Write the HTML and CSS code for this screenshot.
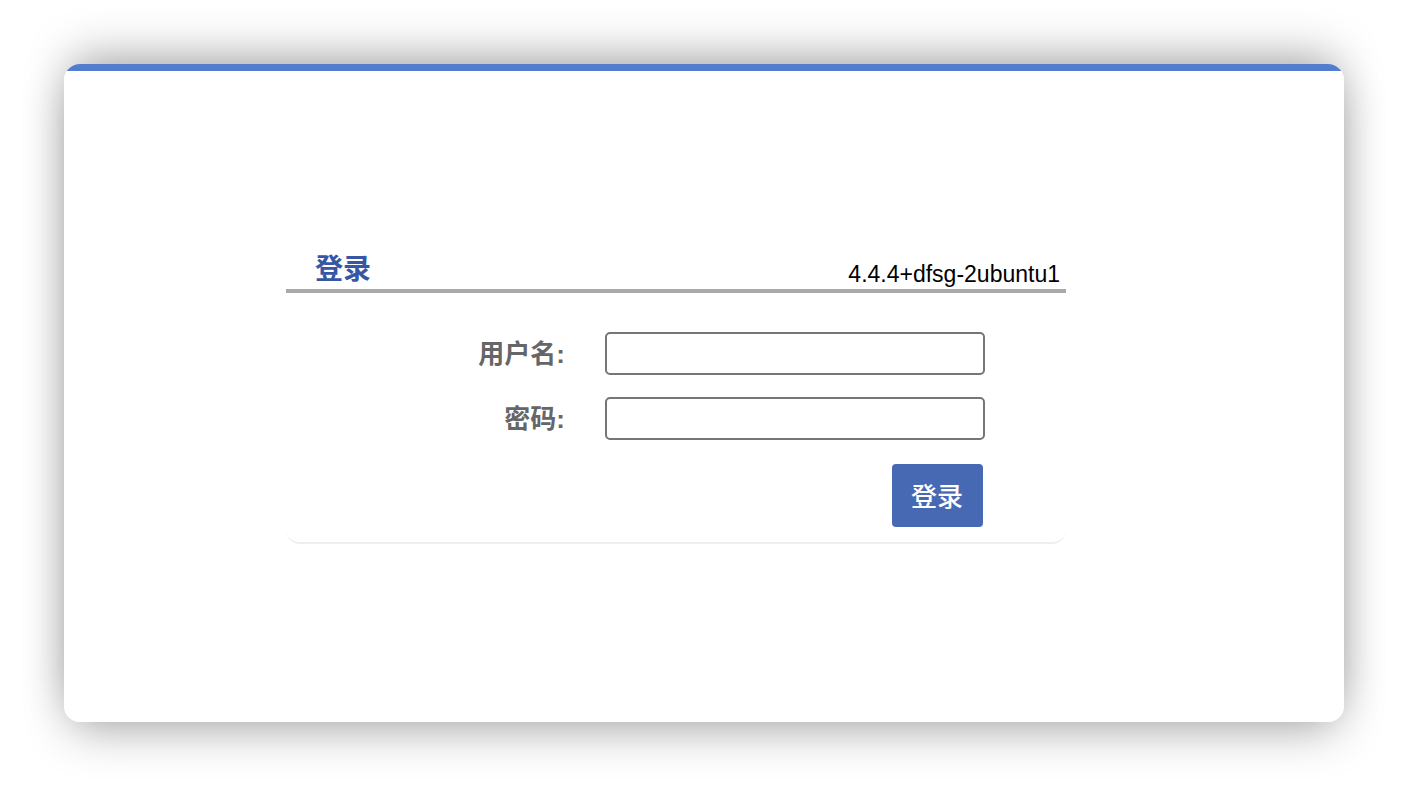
FILE: index.html
```
<!DOCTYPE html>
<html lang="zh-CN">
<head>
<meta charset="utf-8">
<title>登录</title>
<link rel="stylesheet" href="styles.css">
</head>
<body>
<main class="window">
  <form class="login">
    <header class="login-header">
      <h1 class="title">登录</h1>
      <span class="version">4.4.4+dfsg-2ubuntu1</span>
    </header>
    <div class="fields">
      <label class="label" for="user">用户名:</label>
      <input class="input" id="user" type="text">
      <label class="label" for="pass">密码:</label>
      <input class="input" id="pass" type="password">
    </div>
    <div class="actions">
      <button class="submit" type="submit">登录</button>
    </div>
  </form>
</main>
</body>
</html>
```
FILE: styles.css
```
* {
  box-sizing: border-box;
}

body {
  margin: 0;
  min-height: 100vh;
  padding: 64px;
  display: flex;
  background: #fff;
  font-family: "Liberation Sans", "Noto Sans CJK SC", sans-serif;
}

.window {
  flex: 1;
  display: flex;
  justify-content: center;
  align-items: flex-start;
  padding: 176px 56px 0 0;
  border-radius: 16px;
  background: linear-gradient(#527dcf 7px, #fff 7px);
  box-shadow: 0 16px 48px -8px rgba(0, 0, 0, 0.3), 0 -16px 48px -8px rgba(0, 0, 0, 0.3);
}

.login {
  flex: 0 1 780px;
  border-bottom: 2px solid #eee;
  border-radius: 0 0 14px 14px;
}

.login-header {
  display: flex;
  justify-content: space-between;
  align-items: flex-end;
  padding: 11px 6px 0 29px;
  border-bottom: 4px solid #a9a9a9;
}

.title {
  margin: 0;
  font-size: 28px;
  line-height: 38px;
  color: #3557a5;
}

.version {
  font-size: 23px;
  line-height: 30px;
}

.fields {
  display: grid;
  grid-template-columns: 279px 380px;
  column-gap: 40px;
  row-gap: 22px;
  align-items: center;
  padding-top: 39px;
}

.label {
  text-align: right;
  font-size: 26px;
  line-height: 40px;
  font-weight: bold;
  color: #666;
}

.input {
  height: 43px;
  padding: 2px 6px;
  border: 2px solid #767676;
  border-radius: 5px;
  background: #fff;
  font: inherit;
  font-size: 26px;
}

.actions {
  display: flex;
  justify-content: flex-end;
  padding: 24px 83px 15px 0;
}

.submit {
  height: 63px;
  padding: 0 20px 2px 19px;
  border: 0;
  border-radius: 4px;
  background: #4768b3;
  color: #fff;
  font: inherit;
  font-size: 26px;
  font-weight: 500;
}
```
